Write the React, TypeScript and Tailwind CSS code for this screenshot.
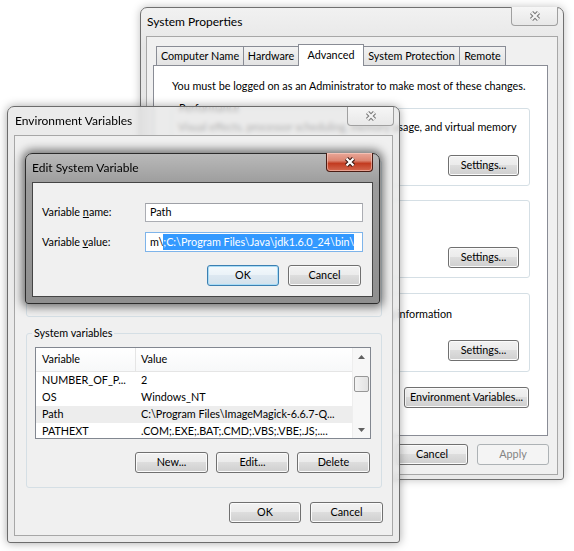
import React from 'react'

const btnNormal =
  'border-[#707070] bg-[linear-gradient(to_bottom,#f2f2f2_0%,#ebebeb_49%,#dddddd_50%,#cfcfcf_100%)] shadow-[inset_0_0_0_1px_#fbfbfb]'
const btnDefault =
  'border-[#3c7fb1] bg-[linear-gradient(to_bottom,#f4f9fc_0%,#eaf2f8_49%,#dde8f1_50%,#d3e1ec_100%)] shadow-[inset_0_0_0_1px_#a9dcf6]'
const btnDisabled = 'border-[#adb2b5] bg-[#f4f4f4] text-[#838383]'

type BtnProps = { label?: React.ReactNode; className?: string; variant?: 'normal' | 'default' | 'disabled' }

const Button = ({ label, className = '', variant = 'normal' }: BtnProps) => (
  <div
    className={`flex shrink-0 items-center justify-center rounded-[3px] border leading-none ${
      variant === 'default' ? btnDefault : variant === 'disabled' ? btnDisabled : btnNormal
    } ${className}`}
  >
    {label}
  </div>
)

const CloseButton = ({ active = false, className = '' }: { active?: boolean; className?: string }) => (
  <div
    className={`flex h-[19px] w-[47px] items-center justify-center rounded-b-[4px] border border-t-0 ${
      active
        ? 'border-[#4a1c14] bg-[linear-gradient(to_bottom,#e9a899_0%,#dc8672_42%,#c23b20_58%,#d4684f_100%)] shadow-[inset_0_0_0_1px_rgba(255,220,210,0.5)]'
        : 'border-[#a0a0a0] bg-[linear-gradient(to_bottom,#f6f6f6,#e8e8e8)]'
    } ${className}`}
  >
    <svg width="14" height="12" viewBox="0 0 14 12">
      <path d="M3.5 2.5 L10.5 9.5 M10.5 2.5 L3.5 9.5" stroke={active ? '#3b1812' : '#7a7a7a'} strokeWidth="4.4" />
      <path d="M3.5 2.5 L10.5 9.5 M10.5 2.5 L3.5 9.5" stroke={active ? '#ffffff' : '#f4f4f4'} strokeWidth="2.2" />
    </svg>
  </div>
)

const GroupBox = ({ label, bg, className = '', children }: { label?: string; bg: string; className?: string; children?: React.ReactNode }) => (
  <div className={`relative flex flex-col rounded-[3px] border border-[#d5dfe5] ${className}`}>
    {label && <span className={`absolute left-[5px] top-[-8px] px-[2px] leading-[14px] ${bg}`}>{label}</span>}
    {children}
  </div>
)

const tabs = [
  { name: 'Computer Name', w: 'w-[88px]' },
  { name: 'Hardware', w: 'w-[56px]' },
  { name: 'Advanced', w: 'w-[66px]', selected: true },
  { name: 'System Protection', w: 'w-[97px]' },
  { name: 'Remote', w: 'w-[47px]' },
]

const rows = [
  { name: 'NUMBER_OF_P...', value: '2' },
  { name: 'OS', value: 'Windows_NT' },
  { name: 'Path', value: 'C:\\Program Files\\ImageMagick-6.6.7-Q...', hl: true },
  { name: 'PATHEXT', value: '.COM;.EXE;.BAT;.CMD;.VBS;.VBE;.JS;....' },
]

const SystemProperties = () => (
  <div className="absolute left-[140px] top-[7px] flex h-[473px] w-[424px] flex-col rounded-t-[7px] rounded-b-[3px] border border-[#707070] bg-[linear-gradient(to_bottom,#f1f1f1,#e6e6e6_40px,#e9e9e9)] shadow-[0_0_8px_rgba(0,0,0,0.25)]">
    <div className="relative h-[28px] shrink-0 pl-[6px] pt-[6px] text-[12px] leading-[16px]">
      System Properties
      <CloseButton className="absolute right-[5px] top-[-1px]" />
    </div>
    <div className="mx-[5px] mb-[4px] flex flex-1 flex-col border border-[#a7a7a7] bg-[#f0f0f0]">
      <div className="relative z-10 ml-[9px] mt-[7px] flex h-[22px] items-start">
        {tabs.map((t) =>
          t.selected ? (
            <div key={t.name} className={`-ml-px flex h-[22px] ${t.w} items-start justify-center border border-b-0 border-[#898c95] bg-white pt-[3px] leading-[14px]`}>
              {t.name}
            </div>
          ) : (
            <div
              key={t.name}
              className={`-ml-px mt-[2px] flex h-[19px] ${t.w} items-center justify-center border border-b-0 border-[#898c95] bg-[linear-gradient(to_bottom,#f2f2f2,#e3e3e3)] leading-[14px] first:ml-0`}
            >
              {t.name}
            </div>
          ),
        )}
      </div>
      <div className="-mt-px ml-[6px] flex h-[371px] w-[395px] flex-col border border-[#898c95] bg-white">
        <div className="ml-[18px] mt-[13px] leading-[14px]">You must be logged on as an Administrator to make most of these changes.</div>
        <GroupBox label="Performance" bg="bg-white" className="ml-[17px] mt-[15px] h-[78px] w-[359px]">
          <div className="pl-[6px] pt-[11px] leading-[14px]">Visual effects, processor scheduling, memory usage, and virtual memory</div>
          <Button label="Settings..." className="mb-[9px] mr-[10px] mt-auto h-[21px] w-[71px] self-end" />
        </GroupBox>
        <GroupBox label="User Profiles" bg="bg-white" className="ml-[17px] mt-[14px] h-[78px] w-[359px]">
          <div className="pl-[6px] pt-[11px] leading-[14px]">Desktop settings related to your logon</div>
          <Button label="Settings..." className="mb-[9px] mr-[10px] mt-auto h-[21px] w-[71px] self-end" />
        </GroupBox>
        <GroupBox label="Startup and Recovery" bg="bg-white" className="ml-[17px] mt-[15px] h-[79px] w-[359px]">
          <div className="pl-[6px] pt-[13px] leading-[14px]">System startup, system failure, and debugging information</div>
          <Button label="Settings..." className="mb-[10px] mr-[10px] mt-auto h-[21px] w-[71px] self-end" />
        </GroupBox>
        <Button label="Environment Variables..." className="mr-[18px] mt-[15px] h-[21px] w-[125px] self-end" />
      </div>
      <div className="mr-[8px] mt-[8px] flex justify-end gap-[9px]">
        {/* OK sits under the Environment Variables window */}
        <Button className="h-[21px] w-[72px]" />
        <Button label="Cancel" className="h-[21px] w-[72px]" />
        <Button label="Apply" variant="disabled" className="h-[21px] w-[72px]" />
      </div>
    </div>
  </div>
)

const EnvironmentVariables = () => (
  <div className="absolute left-[7px] top-[106px] flex h-[437px] w-[393px] flex-col rounded-t-[7px] rounded-b-[3px] border border-[#6c6c6c] bg-[#e4e4e4]/75 shadow-[0_0_10px_rgba(0,0,0,0.35)] backdrop-blur-[2px]">
    <div className="relative h-[28px] shrink-0 pl-[7px] pt-[6px] text-[12px] leading-[16px]">
      Environment Variables
      <CloseButton className="absolute right-[5px] top-0" />
    </div>
    <div className="mx-[6px] mb-[6px] flex flex-1 flex-col border border-[#a7a7a7] bg-[#f0f0f0]">
      <GroupBox bg="bg-[#f0f0f0]" className="ml-[11px] mt-[24px] h-[157px] w-[356px]" />
      <GroupBox label="System variables" bg="bg-[#f0f0f0]" className="ml-[11px] mt-[16px] h-[155px] w-[356px]">
        <div className="ml-[8px] mt-[13px] flex h-[92px] w-[336px] overflow-hidden border border-[#828790] bg-white">
          <div className="flex flex-1 flex-col">
            <div className="flex h-[24px] shrink-0 border-b border-[#e5e5e5] bg-[linear-gradient(to_bottom,#ffffff,#f7f8f9)]">
              <div className="flex w-[100px] items-center border-r border-[#e5e5e5] pl-[6px]">Variable</div>
              <div className="flex items-center pl-[5px]">Value</div>
            </div>
            {rows.map((r) => (
              <div key={r.name} className={`flex h-[17px] shrink-0 items-center ${r.hl ? 'bg-[#ededed]' : ''}`}>
                <div className="w-[101px] whitespace-nowrap pl-[6px]">{r.name}</div>
                <div className="whitespace-nowrap pl-[4px]">{r.value}</div>
              </div>
            ))}
          </div>
          <div className="flex w-[18px] shrink-0 flex-col items-center bg-[#f7f7f7] shadow-[inset_1px_0_0_#eeeeee]">
            <svg className="mt-[7px]" width="7" height="4" viewBox="0 0 7 4">
              <path d="M0 4 L3.5 0 L7 4 Z" fill="#606060" />
            </svg>
            <div className="mt-[17px] h-[16px] w-[15px] rounded-[2px] border border-[#979797] bg-[linear-gradient(to_right,#f3f3f3,#e2e2e2)]" />
            <svg className="mt-auto mb-[6px]" width="7" height="4" viewBox="0 0 7 4">
              <path d="M0 0 L7 0 L3.5 4 Z" fill="#606060" />
            </svg>
          </div>
        </div>
        <div className="mr-[11px] mt-[13px] flex justify-end gap-[8px]">
          <Button label="New..." className="h-[21px] w-[73px]" />
          <Button label="Edit..." className="h-[21px] w-[73px]" />
          <Button label="Delete" className="h-[21px] w-[73px]" />
        </div>
      </GroupBox>
      <div className="mr-[9px] mt-[14px] flex justify-end gap-[9px]">
        <Button label="OK" className="h-[21px] w-[72px]" />
        <Button label="Cancel" className="h-[21px] w-[73px]" />
      </div>
    </div>
  </div>
)

const EditSystemVariable = () => (
  <div className="absolute left-[25px] top-[153px] flex h-[151px] w-[355px] flex-col rounded-t-[7px] rounded-b-[3px] border border-[#2c2c2c] bg-[linear-gradient(to_bottom,#b9b9b9,#9c9c9c_30px,#8f8f8f)] shadow-[0_0_10px_3px_rgba(0,0,0,0.55)]">
    <div className="relative h-[28px] shrink-0 pl-[6px] pt-[6px] text-[12px] leading-[16px]">
      Edit System Variable
      <CloseButton active className="absolute right-[6px] top-[-1px] w-[46px]" />
    </div>
    <div className="mx-[6px] mb-[6px] flex flex-1 flex-col border border-[#454545] bg-[#f0f0f0]">
      <div className="mt-[20px] flex items-center">
        <div className="w-[112px] pl-[9px]">
          Variable <u>n</u>ame:
        </div>
        <div className="flex h-[19px] w-[218px] items-center border border-[#abadb3] border-t-[#9ea0a6] bg-white pl-[4px]">Path</div>
      </div>
      <div className="mt-[10px] flex items-center">
        <div className="w-[112px] pl-[9px]">
          Variable <u>v</u>alue:
        </div>
        <div className="flex h-[20px] w-[218px] items-center overflow-hidden whitespace-nowrap border border-[#7eb4ea] bg-white pl-[4px]">
          m\<span className="bg-[#3399ff] text-white">;C:\Program Files\Java\jdk1.6.0_24\bin\</span>
        </div>
      </div>
      <div className="mr-[11px] mt-[13px] flex justify-end gap-[9px]">
        <Button label="OK" variant="default" className="h-[21px] w-[72px]" />
        <Button label="Cancel" className="h-[21px] w-[73px]" />
      </div>
    </div>
  </div>
)

const App = () => {
  return (
    <div className="relative h-[551px] w-[574px] overflow-hidden bg-white font-[Lato,sans-serif] text-[10.8px] text-black">
      <SystemProperties />
      <EnvironmentVariables />
      <EditSystemVariable />
    </div>
  )
}

export default App
